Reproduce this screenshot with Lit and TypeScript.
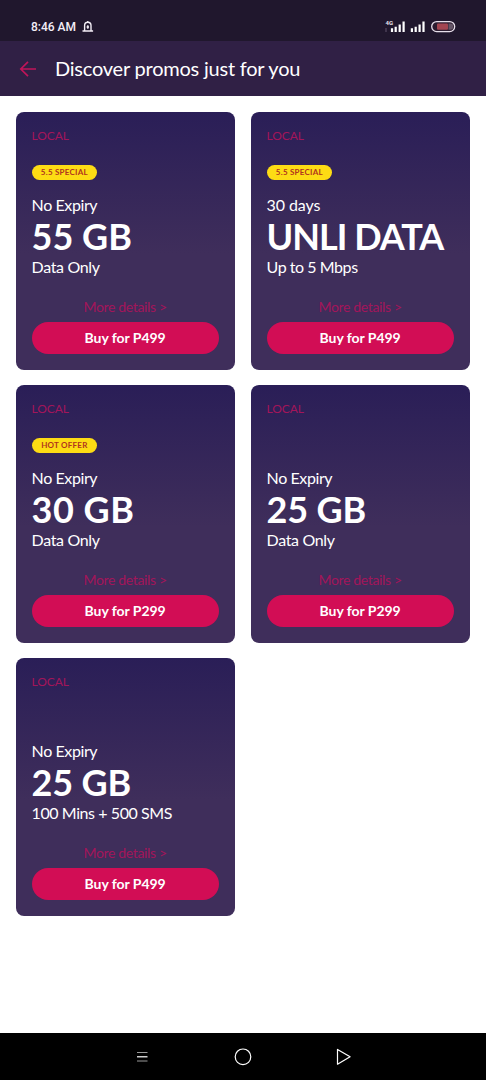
import { LitElement, html, css, nothing } from "lit";
import { customElement, property } from "lit/decorators.js";
import { styleMap } from "lit/directives/style-map.js";

interface Promo {
  badge?: string;
  validity: string;
  amount: string;
  detail: string;
  price: string;
  tracking: [validity: number, amount: number, detail: number];
}

const PROMOS: Promo[] = [
  { badge: "5.5 SPECIAL", validity: "No Expiry", amount: "55 GB", detail: "Data Only", price: "P499", tracking: [-0.4, 0, -0.35] },
  { badge: "5.5 SPECIAL", validity: "30 days", amount: "UNLI DATA", detail: "Up to 5 Mbps", price: "P499", tracking: [-0.1, -1, -0.45] },
  { badge: "HOT OFFER", validity: "No Expiry", amount: "30 GB", detail: "Data Only", price: "P299", tracking: [-0.4, 0.5, -0.35] },
  { validity: "No Expiry", amount: "25 GB", detail: "Data Only", price: "P299", tracking: [-0.4, -0.2, -0.35] },
  { validity: "No Expiry", amount: "25 GB", detail: "100 Mins + 500 SMS", price: "P499", tracking: [-0.4, -0.2, -0.42] },
];

const spacing = (px: number) => styleMap({ letterSpacing: `${px}px` });

@customElement("promo-card")
export class PromoCard extends LitElement {
  @property({ attribute: false }) promo!: Promo;

  static styles = css`
    :host {
      display: flex;
      flex-direction: column;
      box-sizing: border-box;
      height: 257.4px;
      padding: 16px 16px 15px;
      border-radius: 8px;
      background: linear-gradient(#2a1e57 0%, #3f2e5b 55%, #3f2e5b 100%);
      color: #fff;
      white-space: nowrap;
    }
    .tag {
      font-size: 12px;
      line-height: 16px;
      height: 16px;
      color: #a3155a;
      letter-spacing: -0.1px;
    }
    .slot {
      height: 16px;
      margin-top: 20px;
      display: flex;
    }
    .badge {
      width: 65.6px;
      height: 15px;
      margin-top: 0.5px;
      border-radius: 8px;
      background: #fddc14;
      color: #b0331f;
      font-size: 8px;
      font-weight: 700;
      line-height: 15px;
      text-align: center;
      letter-spacing: 0.25px;
    }
    .validity {
      margin-top: 15px;
      font-size: 16px;
      line-height: 20px;
      height: 20px;
    }
    .amount {
      font-size: 36px;
      font-weight: 700;
      line-height: 42px;
      height: 42px;
    }
    .detail {
      font-size: 16px;
      line-height: 20px;
      height: 20px;
    }
    .more {
      margin-top: 22px;
      font-size: 14px;
      line-height: 16px;
      height: 16px;
      text-align: center;
      color: #a3155a;
      letter-spacing: -0.35px;
    }
    .buy {
      margin-top: 7px;
      height: 32px;
      border: 0;
      border-radius: 16px;
      padding: 0;
      background: #d20d55;
      color: #fff;
      font: inherit;
      font-size: 14px;
      font-weight: 700;
      line-height: 32px;
      letter-spacing: -0.05px;
    }
  `;

  render() {
    const p = this.promo;
    const [validity, amount, detail] = p.tracking;
    return html`
      <div class="tag">LOCAL</div>
      <div class="slot">${p.badge ? html`<span class="badge">${p.badge}</span>` : nothing}</div>
      <div class="validity" style=${spacing(validity)}>${p.validity}</div>
      <div class="amount" style=${spacing(amount)}>${p.amount}</div>
      <div class="detail" style=${spacing(detail)}>${p.detail}</div>
      <div class="more">More details &gt;</div>
      <button class="buy">Buy for ${p.price}</button>
    `;
  }
}

@customElement("app-root")
export class AppRoot extends LitElement {
  static styles = css`
    :host {
      display: flex;
      flex-direction: column;
      height: 1080px;
      background: #fff;
      font-family: Lato, "Open Sans", sans-serif;
    }
    .status {
      display: flex;
      align-items: flex-start;
      height: 41px;
      background: #20172d;
      color: #f3eef6;
    }
    .time {
      margin: 19px 0 0 31px;
      font: 500 12px/16px Roboto, sans-serif;
      width: 51px;
      white-space: nowrap;
    }
    .bell {
      margin-top: 20px;
    }
    .signals {
      margin: 18px 29px 0 auto;
    }
    .bar {
      display: flex;
      align-items: center;
      height: 55.3px;
      background: #302045;
      color: #fff;
    }
    .back {
      margin-left: 18px;
    }
    h1 {
      margin: 0 0 1.5px 17px;
      font-size: 20px;
      font-weight: 400;
      line-height: 24px;
      white-space: nowrap;
      letter-spacing: -0.22px;
    }
    .grid {
      flex: 1;
      display: grid;
      grid-template-columns: 219px 219px;
      grid-auto-rows: 257px;
      gap: 16px;
      padding: 15.9px 0 0 15.6px;
    }
    .nav {
      display: flex;
      height: 47px;
      background: #000;
    }
  `;

  render() {
    return html`
      <div class="status">
        <span class="time">8:46 AM</span>
        <svg class="bell" width="12" height="13" viewBox="0 0 12 13" fill="none" stroke="#f3eef6" stroke-width="1.4">
          <path d="M2.6 10.6V5.4a3.2 3.2 0 0 1 6.4 0v5.2M.5 11h10.6M5.8 2.2V.9M5.8 5.2v3.6M4.6 7h2.4" />
        </svg>
        <svg class="signals" width="74" height="18" viewBox="0 0 74 18">
          <text x="2.6" y="7.2" font-family="Roboto" font-size="6" font-weight="700" fill="#e8e2ee">4G</text>
          <path d="M3 10v4" stroke="#5e536c" stroke-width="1" />
          <path d="M9 10.2V14M12.7 8.8V14M16.7 6.6V14M20.6 3.6V14M28.9 10.2V14M32.7 8.8V14M36.6 6.6V14M40.5 3.6V14" stroke="#fff" stroke-width="2.2" />
          <rect x="48.7" y="3.6" width="23" height="10" rx="5" fill="#2c1c30" stroke="#e6deea" stroke-width="1.3" />
          <rect x="54" y="5.5" width="11" height="6.2" rx="1" fill="#a34551" />
          <path d="M65.5 5.5h1.8a3 3 0 0 1 0 6.2h-1.8z" fill="#655667" />
        </svg>
      </div>
      <div class="bar">
        <svg class="back" width="20" height="20" viewBox="0 0 20 20" fill="none" stroke="#c01459" stroke-width="1.7">
          <path d="M18 10H3M10 2.8L2.8 10l7.2 7.2" />
        </svg>
        <h1>Discover promos just for you</h1>
      </div>
      <div class="grid">${PROMOS.map((p) => html`<promo-card .promo=${p}></promo-card>`)}</div>
      <div class="nav">
        <svg width="486" height="47" viewBox="0 0 486 47" fill="none" stroke="#fff" stroke-width="1.2">
          <path d="M137 19.5h10.5M137 28h10.5" stroke="#999" stroke-width="1" />
          <path d="M137 23.8h10.5" />
          <circle cx="243" cy="23.8" r="7.8" />
          <path d="M337.5 16.4v14.8l12.6-7.4z" stroke-linejoin="round" />
        </svg>
      </div>
    `;
  }
}
